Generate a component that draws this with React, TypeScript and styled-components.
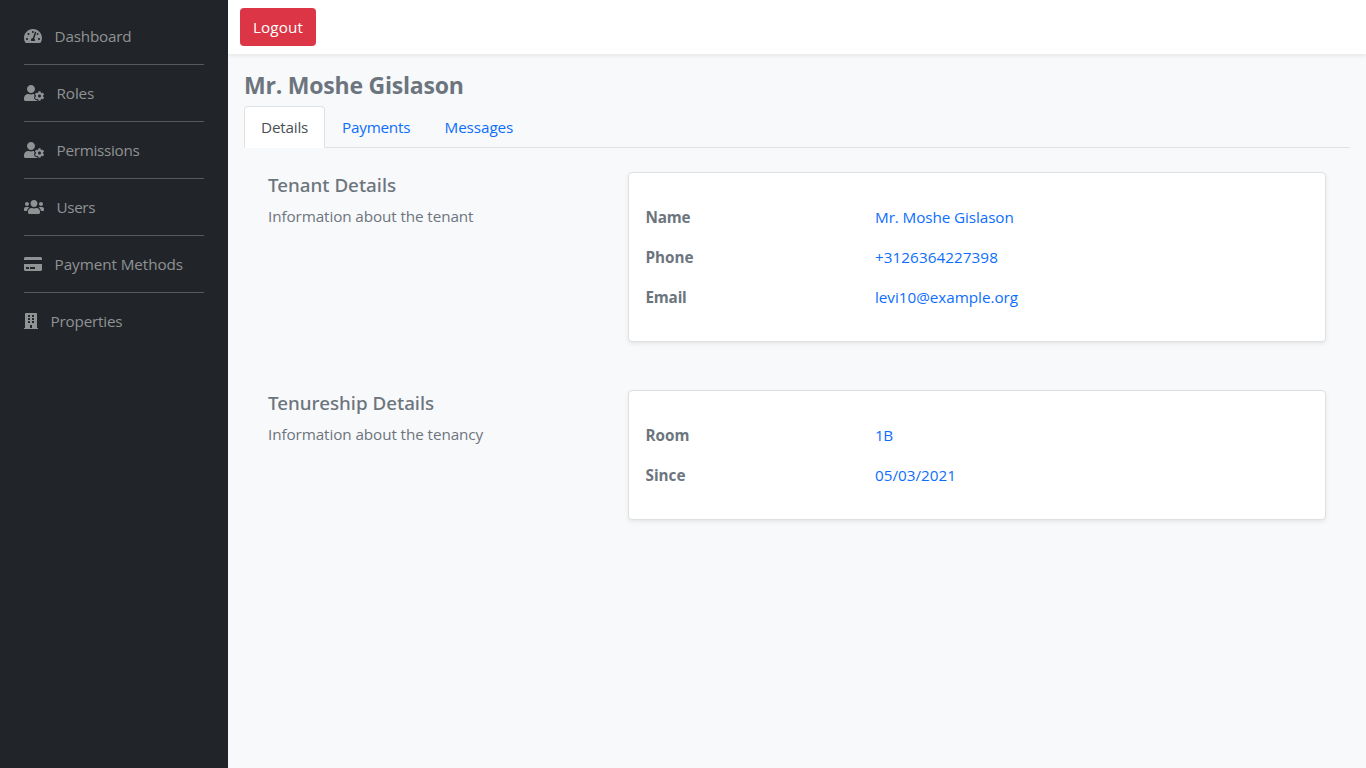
import React from 'react';
import styled, { createGlobalStyle } from 'styled-components';
import { FaBuilding, FaCreditCard, FaTachometerAlt, FaUserCog, FaUsers } from 'react-icons/fa';
import type { IconType } from 'react-icons';

const GlobalStyle = createGlobalStyle`
  *, *::before, *::after { box-sizing: border-box; }
  body {
    margin: 0;
    background: #f8f9fb;
    color: #6c757d;
    font-family: "Open Sans", "Noto Sans", sans-serif;
    font-size: 15.25px;
    line-height: 24px;
  }
  h1, h2, p, dl, dt, dd, ul { margin: 0; padding: 0; }
  a { color: #0d6efd; text-decoration: none; }
`;

const Label = styled.span<{ $track?: number }>`
  letter-spacing: ${({ $track = 0 }) => $track}px;
  white-space: nowrap;
`;

const Shell = styled.div`
  display: flex;
  height: 100vh;
`;

const Sidebar = styled.nav`
  flex: 0 0 228px;
  padding: 8px 24px;
  background: #212529;
`;

const SideLink = styled.a`
  display: flex;
  align-items: center;
  gap: 12.6px;
  height: 56px;
  color: #909294;

  & + & {
    height: 57px;
    border-top: 1px solid #565a5d;
  }
`;

const SideIcon = styled.span<{ $width: number }>`
  display: flex;
  flex: 0 0 ${({ $width }) => $width}px;

  svg {
    width: 100%;
    height: 16px;
  }
`;

const Main = styled.main`
  flex: 1;
  display: flex;
  flex-direction: column;
  min-width: 0;
`;

const TopBar = styled.header`
  display: flex;
  align-items: center;
  height: 54px;
  padding: 0 12px;
  background: #fff;
  box-shadow: 0 2px 4px rgba(0, 0, 0, 0.075);
`;

const LogoutButton = styled.button`
  width: 76px;
  height: 38px;
  padding: 0;
  border: 0;
  border-radius: 4px;
  background: #dc3545;
  color: #fff;
  font: inherit;
`;

const Content = styled.section`
  padding: 16px;
`;

const Title = styled.h1`
  height: 36px;
  font-size: 23px;
  font-weight: 700;
  line-height: 31px;
`;

const Tabs = styled.div`
  display: flex;
  height: 42px;
  border-bottom: 1px solid #dee2e6;
`;

const Tab = styled.a<{ $width: number; $active?: boolean }>`
  width: ${({ $width }) => $width}px;
  height: 42px;
  padding: 8px 0 0 16px;
  border: 1px solid transparent;
  border-radius: 4px 4px 0 0;
  ${({ $active }) =>
    $active &&
    `
    border-color: #dee2e6 #dee2e6 #fff;
    background: #fff;
    color: #495057;
  `}
`;

const Sections = styled.div`
  display: flex;
  flex-direction: column;
  gap: 48px;
  padding: 24px;
`;

const Section = styled.section`
  display: grid;
  grid-template-columns: 360px 1fr;
`;

const SectionTitle = styled.h2`
  margin-bottom: 6px;
  font-family: "Noto Sans", sans-serif;
  font-size: 18.8px;
  font-weight: 500;
  line-height: 26px;
`;

const Card = styled.dl`
  padding: 24px 16px;
  border: 1px solid #dfe0e2;
  border-radius: 4px;
  background: #fff;
  box-shadow: 0 2px 4px rgba(0, 0, 0, 0.075);
`;

const Field = styled.div`
  display: grid;
  grid-template-columns: 229.5px 1fr;
  align-items: center;
  height: 40px;
  padding-left: 0.5px;
`;

const FieldName = styled.dt`
  font-weight: 700;
`;

interface Text {
  text: string;
  track?: number;
}

const links: (Text & { icon: IconType; width: number })[] = [
  { text: 'Dashboard', track: -0.2, icon: FaTachometerAlt, width: 18 },
  { text: 'Roles', track: -0.15, icon: FaUserCog, width: 20 },
  { text: 'Permissions', track: -0.3, icon: FaUserCog, width: 20 },
  { text: 'Users', track: -0.4, icon: FaUsers, width: 20 },
  { text: 'Payment Methods', track: -0.08, icon: FaCreditCard, width: 18 },
  { text: 'Properties', track: -0.2, icon: FaBuilding, width: 14 },
];

const sections: { title: Text; info: Text; fields: [Text, Text][] }[] = [
  {
    title: { text: 'Tenant Details' },
    info: { text: 'Information about the tenant', track: -0.1 },
    fields: [
      [{ text: 'Name', track: -0.2 }, { text: 'Mr. Moshe Gislason', track: -0.09 }],
      [{ text: 'Phone' }, { text: '+3126364227398', track: 0.06 }],
      [{ text: 'Email', track: -0.2 }, { text: 'levi10@example.org', track: -0.03 }],
    ],
  },
  {
    title: { text: 'Tenureship Details' },
    info: { text: 'Information about the tenancy', track: -0.09 },
    fields: [
      [{ text: 'Room' }, { text: '1B', track: -0.4 }],
      [{ text: 'Since' }, { text: '05/03/2021' }],
    ],
  },
];

export default function App() {
  return (
    <Shell>
      <GlobalStyle />
      <Sidebar>
        {links.map(({ text, track, icon: Icon, width }) => (
          <SideLink key={text} href="#">
            <SideIcon $width={width}><Icon /></SideIcon>
            <Label $track={track}>{text}</Label>
          </SideLink>
        ))}
      </Sidebar>
      <Main>
        <TopBar>
          <LogoutButton><Label $track={0.1}>Logout</Label></LogoutButton>
        </TopBar>
        <Content>
          <Title><Label $track={-0.22}>Mr. Moshe Gislason</Label></Title>
          <Tabs>
            <Tab href="#" $width={81} $active><Label $track={-0.19}>Details</Label></Tab>
            <Tab href="#" $width={102.5}><Label $track={-0.22}>Payments</Label></Tab>
            <Tab href="#" $width={103}><Label $track={-0.08}>Messages</Label></Tab>
          </Tabs>
          <Sections>
            {sections.map(({ title, info, fields }) => (
              <Section key={title.text}>
                <div>
                  <SectionTitle><Label $track={title.track}>{title.text}</Label></SectionTitle>
                  <p><Label $track={info.track}>{info.text}</Label></p>
                </div>
                <Card>
                  {fields.map(([name, value]) => (
                    <Field key={name.text}>
                      <FieldName><Label $track={name.track}>{name.text}</Label></FieldName>
                      <dd><a href="#"><Label $track={value.track}>{value.text}</Label></a></dd>
                    </Field>
                  ))}
                </Card>
              </Section>
            ))}
          </Sections>
        </Content>
      </Main>
    </Shell>
  );
}
